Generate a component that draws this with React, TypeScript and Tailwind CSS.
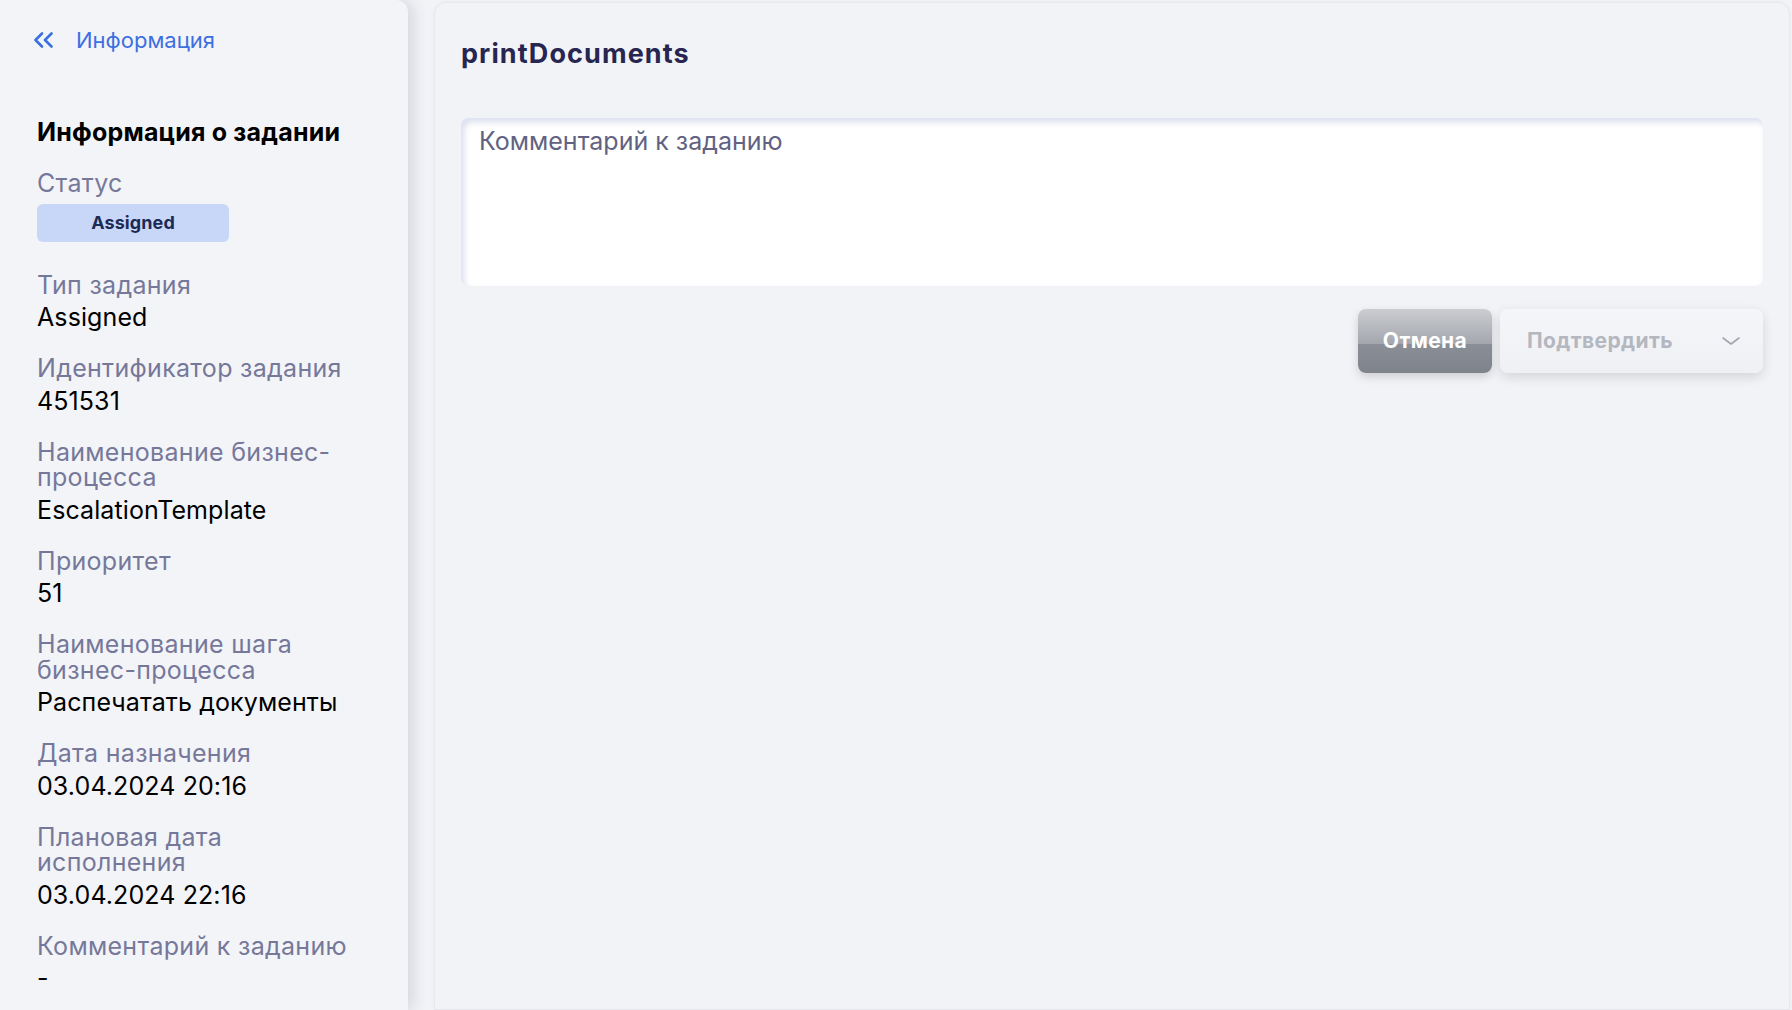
import React from "react";

const fields: { label: React.ReactNode; value: string }[] = [
  { label: "Тип задания", value: "Assigned" },
  { label: "Идентификатор задания", value: "451531" },
  {
    label: (
      <>
        Наименование бизнес-
        <br />
        процесса
      </>
    ),
    value: "EscalationTemplate",
  },
  { label: "Приоритет", value: "51" },
  {
    label: (
      <>
        Наименование шага
        <br />
        бизнес-процесса
      </>
    ),
    value: "Распечатать документы",
  },
  { label: "Дата назначения", value: "03.04.2024 20:16" },
  {
    label: (
      <>
        Плановая дата
        <br />
        исполнения
      </>
    ),
    value: "03.04.2024 22:16",
  },
  { label: "Комментарий к заданию", value: "-" },
];

function DoubleChevron() {
  return (
    <svg width="21" height="16" viewBox="0 0 21 16" fill="none">
      <path d="M9 1.5L2.5 8L9 14.5" stroke="#3b6fe0" strokeWidth="2.6" strokeLinecap="round" strokeLinejoin="round" />
      <path d="M18.5 1.5L12 8L18.5 14.5" stroke="#3b6fe0" strokeWidth="2.6" strokeLinecap="round" strokeLinejoin="round" />
    </svg>
  );
}

function ChevronDown() {
  return (
    <svg width="18" height="8" viewBox="0 0 18 8" fill="none">
      <path d="M1 1L9 7L17 1" stroke="#a3a6ae" strokeWidth="1.6" strokeLinecap="round" strokeLinejoin="round" />
    </svg>
  );
}

export default function App() {
  return (
    <div
      className="flex h-[1010px] w-[1792px] overflow-hidden bg-[#f2f3f7]"
      style={{ fontFamily: "Inter, 'Noto Sans', sans-serif" }}
    >
      {/* Sidebar */}
      <aside className="relative z-10 flex w-[408px] shrink-0 flex-col rounded-tr-[12px] bg-[#f3f4f8] shadow-[6px_0_14px_rgba(40,50,70,0.13)]">
        <div className="mt-[25px] flex h-[30px] items-center pl-[33px]">
          <DoubleChevron />
          <span className="ml-[22px] text-[22px] leading-[30px] text-[#3d6fe0]">Информация</span>
        </div>

        <div className="flex flex-col pl-[37px]">
          <h2 className="mt-[62px] text-[25px] font-bold leading-[30px] tracking-[0.2px] text-black">
            Информация о задании
          </h2>

          <div className="mt-[24px] text-[25px] leading-[25.5px] tracking-[0.3px] text-[#76789a]">Статус</div>
          <div className="mt-[7px] flex h-[38px] w-[192px] items-center justify-center rounded-[6px] bg-[#c8d7f7] text-[18px] font-bold tracking-[0.1px] text-[#1c2a56]">
            Assigned
          </div>

          <div className="mt-[31px] flex flex-col gap-[23px]">
            {fields.map((f, i) => (
              <div key={i} className="flex flex-col">
                <div className="text-[25px] leading-[25.5px] tracking-[0.3px] text-[#76789a]">{f.label}</div>
                <div className="mt-[3px] text-[25px] leading-[32px] tracking-[0.1px] text-black">{f.value}</div>
              </div>
            ))}
          </div>
        </div>
      </aside>

      {/* Main */}
      <main className="ml-[26px] mr-[2px] mt-[2px] flex flex-1 flex-col rounded-t-[12px] border border-[#e6e8ed] bg-[#f2f3f7] px-[26px] shadow-[0_0_4px_rgba(0,0,0,0.04)]">
        <h1 className="mt-[33px] text-[27px] font-bold leading-[36px] tracking-[1.1px] text-[#272650]">
          printDocuments
        </h1>

        <textarea
          className="mt-[46px] h-[168px] w-full resize-none rounded-[8px] bg-white px-[18px] pt-[8px] text-[25px] leading-[30px] text-[#2a2a40] shadow-[inset_3px_4px_6px_rgba(150,160,205,0.35)] outline-none placeholder:text-[#616282]"
          placeholder="Комментарий к заданию"
          style={{ fontFamily: "Inter, 'Noto Sans', sans-serif" }}
        />

        <div className="mt-[23px] flex justify-end gap-[8px]">
          <button className="h-[64px] w-[134px] rounded-[8px] bg-[linear-gradient(180deg,#cbcdd1_0%,#a4a7ae_54%,#8a8e96_55%,#7f838b_100%)] text-[21px] font-bold tracking-[0.4px] text-white shadow-[0_4px_10px_rgba(0,0,0,0.15)]">
            Отмена
          </button>
          <button className="flex h-[64px] w-[263px] items-center justify-between rounded-[8px] bg-[linear-gradient(180deg,#f5f6f9_0%,#eef0f4_100%)] pl-[27px] pr-[23px] text-[21px] font-bold tracking-[0.4px] text-[#b4b7c0] shadow-[0_4px_12px_rgba(0,0,0,0.13)]">
            <span>Подтвердить</span>
            <ChevronDown />
          </button>
        </div>
      </main>
    </div>
  );
}
